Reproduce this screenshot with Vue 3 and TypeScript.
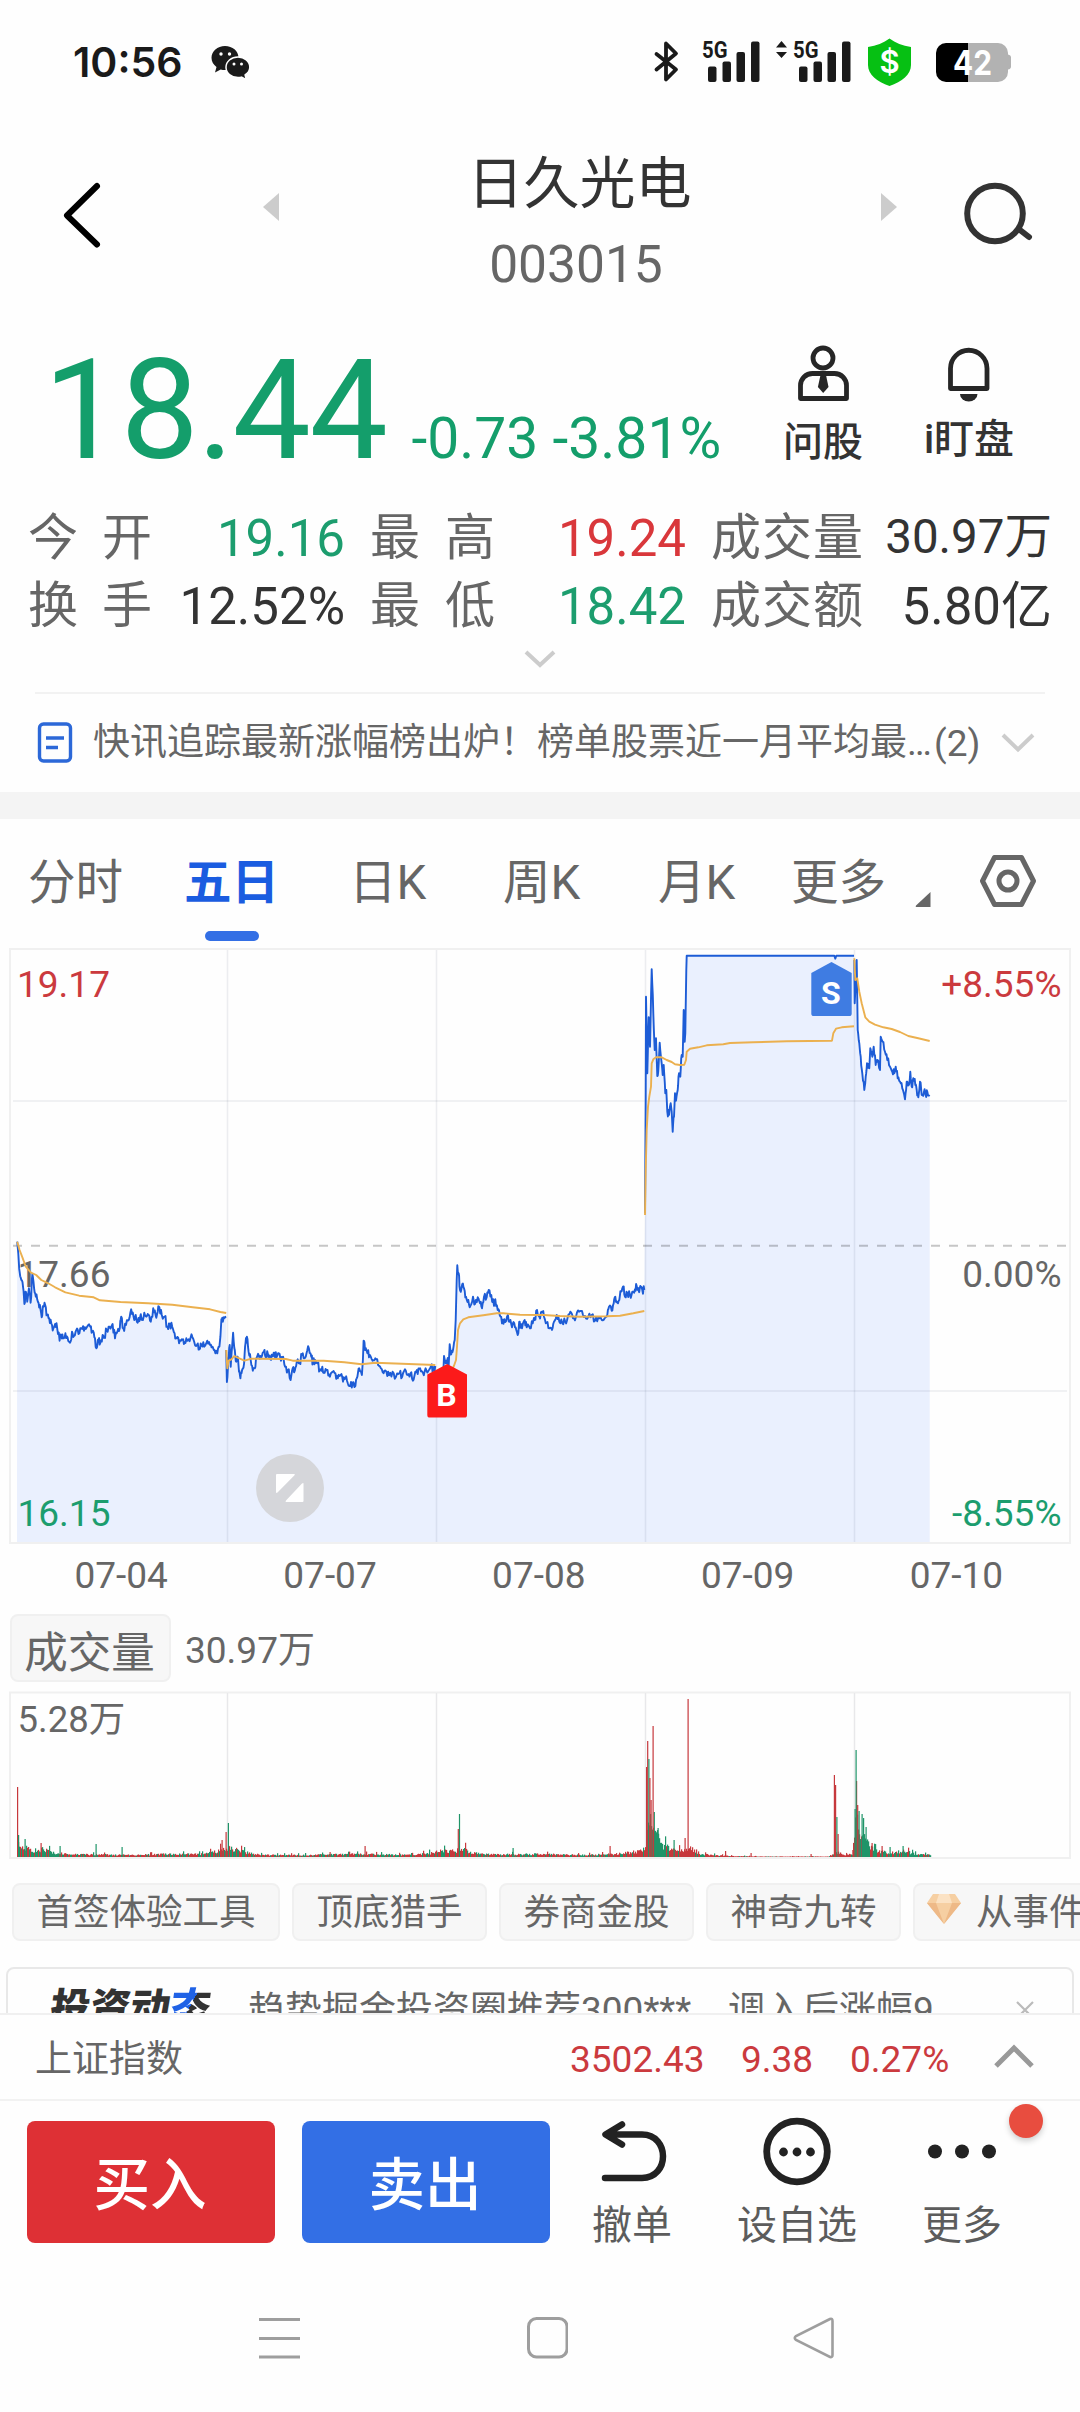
<script setup lang="ts">
type Point = [number, number]

interface Session {
  origin: Point
  unit: Point
  price: number[]
  average: number[]
}

const left: Pick<Session, 'origin' | 'unit'> = { origin: [0, 1200], unit: [2.904, 3] }
const middle: Pick<Session, 'origin' | 'unit'> = { origin: [400, 1200], unit: [3, 3] }
const right: Pick<Session, 'origin' | 'unit'> = { origin: [620, 930], unit: [3, 3] }

const sessions: Session[] = [
  {
    ...left,
    price: [50,125,53,160,57,215,62,240,67,262,71,312,75,275,79,305,84,265,89,308,94,222,99,265,104,290,110,305,116,315,121,352,126,320,131,314,137,345,143,355,149,370,155,385,160,372,166,385,173,422,178,405,183,415,190,400,196,412,203,428,209,395,215,408,222,390,228,402,236,385,244,392,252,382,262,380,268,395,274,412,280,445,286,418,291,430,298,405,303,412,310,390,318,380,327,372,334,415,341,395,348,385,352,350,358,385,366,375,374,360,381,328,388,350,394,345,400,368,407,350,413,355,419,338,425,350,431,345,438,365,445,325,452,345,458,335,463,322,470,345,478,350,486,380,493,372,500,380,507,400,513,415,520,430,528,418,534,432,541,415,548,418,556,403,564,425,572,435,579,448,585,435,593,440,602,422,610,435,617,440,623,450,631,460,637,440,640,410,643,358,647,365,650,352,657,350],
    average: [50,125,57,150,65,172,75,200,90,218,105,225,120,240,140,250,160,262,190,277,230,287,272,292,290,301,350,306,430,310,500,314,560,322,610,328,640,336,657,339],
  },
  {
    ...left,
    price: [657,450,659,546,663,475,667,435,670,500,674,440,677,398,682,450,686,485,690,470,694,515,698,535,703,510,709,490,713,430,717,410,722,455,728,480,734,512,740,505,745,475,752,468,758,475,766,455,772,472,778,462,785,478,791,465,797,458,803,472,810,460,816,482,822,470,828,500,836,510,844,540,850,505,856,512,862,485,870,490,877,465,884,475,890,460,897,445,904,470,909,488,915,480,922,490,929,510,936,500,943,518,951,510,958,530,966,515,974,520,981,535,989,525,996,545,1003,535,1010,550,1017,558,1024,548,1032,558,1038,530,1043,505,1051,525,1054,480,1056,422,1060,450,1067,460,1074,465,1082,482,1090,475,1098,495,1106,505,1114,520,1122,515,1130,526,1140,515,1150,530,1160,520,1168,530,1176,508,1184,525,1192,520,1199,542,1206,515,1213,522,1220,505,1228,518,1236,505,1244,512,1252,498,1258,510,1264,498],
    average: [657,450,660,505,664,482,672,478,680,468,695,475,710,482,730,476,830,477,850,482,940,482,1000,487,1050,493,1090,488,1264,495],
  },
  {
    ...middle,
    price: [110,530,120,540,130,520,132,468,137,490,142,480,146,495,149,433,154,462,159,450,164,420,167,360,170,240,172,196,176,220,180,270,187,252,192,265,198,290,205,300,211,318,219,290,225,312,233,292,240,310,246,325,252,290,260,292,266,270,274,285,282,318,286,298,293,330,299,345,306,370,313,358,321,350,329,365,336,382,343,370,349,390,355,400,359,365,366,385,374,360,380,382,390,385,398,370,404,360,411,330,418,350,425,335,432,350,440,368,448,385,456,390,462,365,470,345,478,365,487,370,496,365,503,352,511,335,519,355,528,350,537,335,546,333,555,348,565,350,575,345,585,362,595,352,605,360,614,355,622,345,627,320,635,332,641,310,646,290,652,308,658,300,663,275,669,260,675,290,682,278,690,285,697,275,705,268,710,258,716,272,721,258,727,270,733,270],
    average: [110,540,150,520,162,497,168,480,171,440,174,390,180,370,190,358,205,352,250,346,290,340,310,340,360,344,430,345,480,348,540,350,620,349,660,347,700,340,733,333],
  },
  {
    ...right,
    price: [75,850,77,500,78,200,82,430,86,262,90,350,95,118,100,250,104,360,108,325,112,438,116,400,119,338,124,390,128,435,131,405,136,490,139,480,142,545,147,555,152,520,155,545,158,605,162,560,165,490,168,512,173,480,177,430,181,440,185,375,188,380,191,240,194,335,196,310,199,120,200,77,643,77,646,86,649,77,702,77],
    average: [75,855,77,720,80,600,84,530,88,500,93,470,95,400,100,388,108,382,125,382,140,390,155,396,165,403,180,405,193,404,198,390,200,365,210,356,235,352,260,346,310,343,330,339,400,337,500,334,636,332,640,310,648,296,665,292,702,289],
  },
  {
    ...right,
    price: [703,90,704,220,707,160,710,90,713,300,718,340,722,380,727,430,733,480,737,440,741,400,748,415,751,355,757,380,761,350,767,405,772,390,780,420,782,320,788,335,795,365,802,390,810,410,817,425,823,430,827,410,833,445,840,455,847,475,855,508,860,455,866,465,871,425,875,470,880,445,886,465,890,480,895,502,900,455,905,495,912,485,917,495,922,485,929,498],
    average: [703,85,706,150,712,145,718,185,725,220,736,262,748,275,765,284,790,292,815,297,840,306,865,318,895,325,929,333],
  },
]

const noise = (n: number): number => {
  const v = Math.sin(n * 127.1 + 11.7) * 43758.5453
  return v - Math.floor(v)
}

const toPoints = (s: Session, flat: number[]): Point[] => {
  const out: Point[] = []
  for (let i = 0; i < flat.length; i += 2) {
    out.push([s.origin[0] + flat[i] / s.unit[0], s.origin[1] + flat[i + 1] / s.unit[1]])
  }
  return out
}

// Minute-level jitter between the recorded turning points.
const roughen = (pts: Point[]): Point[] => {
  const out: Point[] = []
  pts.forEach((p, i) => {
    out.push(p)
    const q = pts[i + 1]
    if (!q || q[0] - p[0] > 10 || q[0] - p[0] < 1.3) return
    for (const t of [0.33, 0.66]) {
      const j = (noise(p[0] + t * 7) - 0.5) * 8
      out.push([p[0] + (q[0] - p[0]) * t, p[1] + (q[1] - p[1]) * t + j])
    }
  })
  return out
}

const join = (pts: Point[]): string => pts.map(([x, y]) => `${x.toFixed(1)},${y.toFixed(1)}`).join(' ')

const priceLines = sessions.map((s) => roughen(toPoints(s, s.price)))
const averageLines = sessions.map((s) => join(toPoints(s, s.average)))
const pricePaths = priceLines.map(join)
const areaPath = (() => {
  const pts = priceLines.flat()
  return `17,1542 ${join(pts)} ${pts[pts.length - 1][0].toFixed(1)},1542`
})()

const gridX = [227.5, 436.5, 645.5, 854.5]
const dates = ['07-04', '07-07', '07-08', '07-09', '07-10']

interface Bar { x: number; h: number; up: boolean }

const envelope: Point[] = [
  [17, 14], [24, 11], [32, 7], [42, 8], [55, 4], [75, 2.5], [95, 2.5], [130, 2], [170, 3], [205, 3],
  [220, 7], [228, 9], [245, 5], [262, 2], [300, 2], [360, 3], [410, 2], [430, 4], [440, 6], [455, 6],
  [462, 9], [472, 4], [490, 2.5], [540, 3], [580, 2], [615, 3], [640, 6], [645, 12], [650, 40], [654, 30],
  [660, 14], [668, 9], [680, 6], [690, 10], [697, 3], [712, 2], [730, 1], [760, 0.5], [828, 0.5],
  [836, 5], [845, 2], [852, 3], [856, 40], [860, 26], [866, 15], [874, 7], [890, 4], [904, 6], [915, 3], [930, 2],
]
const level = (x: number): number => {
  const i = envelope.findIndex((p) => p[0] >= x)
  if (i <= 0) return envelope[i < 0 ? envelope.length - 1 : 0][1]
  const [x0, y0] = envelope[i - 1]
  const [x1, y1] = envelope[i]
  return y0 + ((y1 - y0) * (x - x0)) / (x1 - x0)
}
const bars: Bar[] = []
for (let i = 0; i < 914; i++) {
  const x = 17 + i
  const k = noise(x * 1.37)
  const spike = k > 0.93 ? 1.9 : 0.6 + k * 0.75
  const upShare = x < 60 || (x > 655 && x < 668) || x > 862 ? 0.3 : x > 668 && x < 855 ? 0.85 : 0.6
  bars.push({ x, h: level(x) * spike, up: noise(x * 3.1 + 5) < upShare })
}
const peaks: [number, number, boolean][] = [
  [17.5, 70, true], [18.5, 22, false], [25, 18, false], [41, 14, true], [60, 11, false], [96, 13, false],
  [122, 10, false], [222, 17, true], [226, 25, true], [228.3, 34, false], [330, 5, true], [365, 11, true],
  [458.2, 28, true], [459.4, 43, false], [513, 9, false], [610, 11, true], [646.5, 90, true],
  [647.6, 116, true], [648.8, 98, false], [649.8, 79, true], [651, 57, true], [654.2, 45, false],
  [653, 131, true], [658, 29, false], [674, 17, false], [685, 19, true], [688, 158, true], [725.5, 6, true],
  [751, 4, true], [811, 3, true], [834.3, 82, true], [835.5, 72, true], [836.8, 40, false], [838, 23, true],
  [852.8, 7, true], [855, 48, false], [856, 107, false], [857.6, 52, true], [859, 46, false],
  [862, 43, false], [866, 30, false], [872, 14, true], [882, 11, true], [890, 10, false], [903, 11, false],
]
peaks.forEach(([x, h, up]) => bars.push({ x: x - 0.5, h, up }))

const tabs = [
  { label: '分时', cls: 't1' },
  { label: '五日', cls: 't2 active' },
  { label: '日K', cls: 't3' },
  { label: '周K', cls: 't4' },
  { label: '月K', cls: 't5' },
  { label: '更多', cls: 't6' },
]
const tools = ['首签体验工具', '顶底猎手', '券商金股', '神奇九转']
</script>

<template>
  <div class="screen">
    <div class="status">
      <span class="clock">10:56</span>
      <svg class="wechat" width="40" height="36" viewBox="210 44 40 36">
        <path fill="#1a1a1a" d="M225 46c-7.600 0-13.500 5.200-13.500 11.800 0 3.800 1.900 7 5 9.200l-1.500 5.500 5.700-3c1.400.4 2.800.6 4.300.6 7.500 0 13.500-5.500 13.500-12.300S232.500 46 225 46z" />
        <path fill="#1a1a1a" stroke="#fff" stroke-width="1.500" d="M238 57c-6.800 0-12 4.600-12 10.300s5.200 10.300 12 10.300c1.200 0 2.400-.2 3.500-.5l4.800 2.500-1.200-4.600c2.900-1.900 4.700-4.600 4.700-7.700 0-5.700-5.300-10.300-11.800-10.300z" />
        <g fill="#fff"><circle cx="221" cy="54" r="1.700" /><circle cx="229.500" cy="54" r="1.700" /><circle cx="234" cy="64" r="1.500" /><circle cx="241.500" cy="64" r="1.500" /></g>
      </svg>
      <svg class="signals" width="380" height="64" viewBox="648 30 380 64">
        <path d="M656.500 54 676 69.500 666 79.500V43.500L676 53.500 656.500 69.500" fill="none" stroke="#1a1a1a" stroke-width="3.800" stroke-linejoin="round" stroke-linecap="round" />
        <g fill="#1a1a1a">
          <rect x="708" y="66.500" width="8.500" height="15.500" rx="2" /><rect x="722.500" y="61.500" width="8.500" height="20.500" rx="2" /><rect x="736.500" y="52" width="8.500" height="30" rx="2" /><rect x="751" y="41.500" width="8.500" height="40.500" rx="2" />
          <rect x="799" y="66.500" width="8.500" height="15.500" rx="2" /><rect x="813.500" y="61.500" width="8.500" height="20.500" rx="2" /><rect x="827.500" y="52" width="8.500" height="30" rx="2" /><rect x="842" y="41.500" width="8.500" height="40.500" rx="2" />
          <path d="M776 47.500 781.500 41 787 47.500zM776 52 781.500 58 787 52z" />
        </g>
        <text x="702" y="58" class="net" textLength="25.500" lengthAdjust="spacingAndGlyphs">5G</text>
        <text x="793" y="58" class="net" textLength="25.500" lengthAdjust="spacingAndGlyphs">5G</text>
        <path fill="#06c013" d="M889.500 38.500c6 4.500 13 7 21.500 8.500V65c0 10-9 16.500-21.500 21-12.500-4.500-21.500-11-21.500-21V47c8.500-1.500 15.500-4 21.500-8.500z" />
        <text x="889.500" y="72.500" class="dollar" text-anchor="middle">$</text>
        <path fill="#b2b2b2" d="M968 43h30a10 10 0 0 1 10 10v1.500q3 .5 3 3v9q0 2.500-3 3V72a10 10 0 0 1-10 10h-30z" />
        <path fill="#000" d="M968 43h-22a10 10 0 0 0-10 10v19a10 10 0 0 0 10 10h22z" />
        <text x="972.500" y="75" class="batt" text-anchor="middle" textLength="39" lengthAdjust="spacingAndGlyphs">42</text>
      </svg>
    </div>

    <header class="header">
      <svg class="back" width="44" height="70" viewBox="60 180 44 70"><path d="M97 186 67 215.500l30 29" fill="none" stroke="#000" stroke-width="6" stroke-linecap="round" stroke-linejoin="round" /></svg>
      <svg class="prev" width="18" height="28" viewBox="0 0 18 28"><path fill="#ccc" d="M17 0v28L1 14z" /></svg>
      <div class="title">
        <div class="name">日久光电</div>
        <div class="code">003015</div>
      </div>
      <svg class="next" width="18" height="28" viewBox="0 0 18 28"><path fill="#ccc" d="M1 0v28l16-14z" /></svg>
      <svg class="search" width="72" height="70" viewBox="962 180 72 70"><circle cx="995" cy="213.500" r="27.800" fill="none" stroke="#333" stroke-width="6" /><path d="m1020 230 9 7" stroke="#333" stroke-width="6" stroke-linecap="round" /></svg>
    </header>

    <section class="quote">
      <div class="figures"><span class="price">18.44</span><span class="change">-0.73 -3.81%</span></div>
      <div class="action ask">
        <svg width="56" height="60" viewBox="794 343 56 60">
          <g fill="none" stroke="#262626" stroke-width="4.800"><ellipse cx="822" cy="358" rx="10" ry="10" /><path stroke-linejoin="round" d="M799.500 398.500v-13a12 12 0 0 1 12-12h22a12 12 0 0 1 12 12v13z" /></g>
          <path fill="#262626" d="M819.500 375h5.500l2.500 12-5.300 6-5.300-6z" />
        </svg>
        <span>问股</span>
      </div>
      <div class="action watch">
        <svg width="56" height="60" viewBox="942 343 56 60">
          <path fill="none" stroke="#262626" stroke-width="4.800" stroke-linejoin="round" d="M951.500 388.500v-20a18 18 0 0 1 36.500 0v20z" />
          <path fill="#262626" d="M961 394h17.500a8.700 7.500 0 0 1-17.500 0z" />
        </svg>
        <span>i盯盘</span>
      </div>
    </section>

    <section class="stats">
      <div class="label"><span>今</span><span>开</span></div><div class="value down">19.16</div>
      <div class="label"><span>最</span><span>高</span></div><div class="value up">19.24</div>
      <div class="label"><span>成</span><span>交</span><span>量</span></div><div class="value small">30.97万</div>
      <div class="label"><span>换</span><span>手</span></div><div class="value">12.52%</div>
      <div class="label"><span>最</span><span>低</span></div><div class="value down">18.42</div>
      <div class="label"><span>成</span><span>交</span><span>额</span></div><div class="value">5.80亿</div>
    </section>
    <div class="expand"><svg width="34" height="20" viewBox="0 0 34 20"><path d="m3 3 14 13L31 3" fill="none" stroke="#ccc" stroke-width="4" /></svg></div>

    <section class="news">
      <svg width="36" height="42" viewBox="37 721 36 42"><rect x="39.500" y="723" width="31" height="37" rx="4" fill="none" stroke="#2c68d8" stroke-width="3.400" /><path d="M46 737h18M46 746.500h12" stroke="#2c68d8" stroke-width="3.400" /></svg>
      <span class="headline">快讯追踪最新涨幅榜出炉！榜单股票近一月平均最…</span>
      <span class="count">(2)</span>
      <svg class="caret" width="36" height="22" viewBox="0 0 36 22"><path d="m3 3 15 14.500L33 3" fill="none" stroke="#ccc" stroke-width="4" /></svg>
    </section>
    <div class="band"></div>

    <nav class="tabs">
      <div v-for="t in tabs" :key="t.label" :class="['tab', t.cls]"><span>{{ t.label }}</span></div>
      <svg class="corner" width="16" height="16" viewBox="0 0 16 16"><path fill="#666" d="M15.500 0v15H2q-2 0-1-1.500z" /></svg>
      <svg class="gear" width="58" height="54" viewBox="-29 -27 58 54"><path d="M-13.500-23.500h27L25.500 0l-12 23.500h-27L-25.500 0z" fill="none" stroke="#666" stroke-width="5" stroke-linejoin="round" /><circle r="9" fill="none" stroke="#666" stroke-width="5" /></svg>
    </nav>

    <svg class="chart" width="1080" height="656" viewBox="0 948 1080 656">
      <polygon :points="areaPath" fill="#eaf0fe" />
      <g fill="none" stroke="#f0f0f0" stroke-width="2"><rect x="10" y="949" width="1060" height="594" /></g>
      <g stroke="#1e2850" stroke-opacity=".08" stroke-width="1.500">
        <path v-for="x in gridX" :key="x" :d="`M${x} 950V1542`" />
        <path d="M13 1101H1067M13 1391H1067" />
      </g>
      <path d="M13 1245.700H1067" stroke="#000" stroke-opacity=".22" stroke-width="2" stroke-dasharray="9 9" />
      <g fill="none" stroke="#1d5cd6" stroke-width="1.900" stroke-linejoin="round"><polyline v-for="(p, i) in pricePaths" :key="i" :points="p" /></g>
      <text x="17" y="997" class="lab red">19.17</text>
      <text x="17.500" y="1287" class="lab">17.66</text>
      <text x="17.500" y="1526" class="lab green">16.15</text>
      <text x="1061.500" y="997" class="lab red end">+8.55%</text>
      <text x="1061.500" y="1287" class="lab end">0.00%</text>
      <text x="1061.500" y="1526" class="lab green end">-8.55%</text>
      <g fill="none" stroke="#ebb04f" stroke-width="1.900" stroke-linejoin="round"><polyline v-for="(p, i) in averageLines" :key="i" :points="p" /></g>
      <circle cx="290" cy="1488" r="34" fill="#d5d6da" />
      <path fill="#fff" d="M276.500 1474H294q1.500 0 .5 1.200l-17 17.300q-1.500 1-1.500-.5v-17zM303.500 1483.500V1501q0 1-1 1h-16.500q-1-.5 0-1.500l16-17q1.500-1 1.500 0z" />
      <path fill="#fc1a1a" d="M447.200 1364l19.800 10.500v40.500q0 2.600-2.600 2.600h-34.500q-2.600 0-2.600-2.600v-40.500z" />
      <text x="446.500" y="1405.500" class="mark">B</text>
      <path fill="#3f7ce2" d="M831.500 962l20.200 11v40.500q0 2.600-2.600 2.600H813.900q-2.600 0-2.600-2.600V973z" />
      <text x="830.800" y="1004" class="mark">S</text>
      <text v-for="(d, i) in dates" :key="d" :x="121.200 + 208.800 * i" y="1588" class="lab mid">{{ d }}</text>
    </svg>

    <div class="volume-head"><span class="indicator">成交量</span><span class="amount">30.97万</span></div>

    <svg class="volume" width="1080" height="170" viewBox="0 1690 1080 170">
      <rect x="10" y="1692.500" width="1060" height="165.500" fill="none" stroke="#f0f0f0" stroke-width="2" />
      <path v-for="x in gridX" :key="x" :d="`M${x} 1693V1857`" stroke="#e8e8ea" stroke-width="1.500" />
      <rect v-for="(b, i) in bars" :key="i" :x="b.x" :y="1857 - b.h" width="1.200" :height="b.h" :fill="b.up ? '#c6383c' : '#1f9468'" />
      <text x="17.500" y="1731.500" class="lab vol">5.28万</text>
    </svg>

    <div class="tools">
      <span v-for="t in tools" :key="t" class="tool">{{ t }}</span>
      <span class="tool gem">
        <svg width="34" height="32" viewBox="0 0 34 32"><path fill="#f6cfa2" d="M6 1h22l6 9-17 21L0 10z" /><path fill="#eeb987" d="M0 10h9l8 21zM34 10h-9l-8 21z" /><path fill="#fbe2c4" d="M9 10 12 1h10l3 9z" /></svg>从事件
      </span>
    </div>

    <div class="feed">
      <div class="card">
        <span class="brand">投资动<i>态</i></span>
        <span class="msg">趋势掘金投资圈推荐300***</span>
        <span class="msg two">调入后涨幅9</span>
        <svg width="18" height="18" viewBox="0 0 18 18"><path d="m1 1 16 16M17 1 1 17" stroke="#bbb" stroke-width="2.200" /></svg>
      </div>
    </div>

    <div class="index">
      <span class="iname">上证指数</span><span class="n1">3502.43</span><span class="n2">9.38</span><span class="n3">0.27%</span>
      <svg width="42" height="26" viewBox="0 0 42 26"><path d="M3 23 21 5l18 18" fill="none" stroke="#999" stroke-width="5" /></svg>
    </div>

    <footer class="trade">
      <button class="buy">买入</button>
      <button class="sell">卖出</button>
      <div class="op cancel">
        <svg width="72" height="70" viewBox="597 2117 72 70"><path d="M622 2124.500l-16.500 10 16.500 10M607 2134.500h35c28 0 28 43.500 0 43.500h-37" fill="none" stroke="#222" stroke-width="6.500" stroke-linecap="round" stroke-linejoin="round" /></svg>
        <span>撤单</span>
      </div>
      <div class="op pick">
        <svg width="70" height="70" viewBox="762 2117 70 70"><circle cx="797" cy="2151.500" r="30.300" fill="none" stroke="#222" stroke-width="6.800" /><g fill="#222"><circle cx="783.500" cy="2152" r="4.400" /><circle cx="797" cy="2152" r="4.400" /><circle cx="810.500" cy="2152" r="4.400" /></g></svg>
        <span>设自选</span>
      </div>
      <div class="op more">
        <svg width="70" height="70" viewBox="927.500 2117 70 70"><g fill="#222"><circle cx="935.500" cy="2151.500" r="7" /><circle cx="962.500" cy="2151.500" r="7" /><circle cx="989.500" cy="2151.500" r="7" /></g></svg>
        <span>更多</span>
        <b class="badge"></b>
      </div>
    </footer>

    <div class="sysnav">
      <svg width="42" height="44" viewBox="0 0 42 44"><path d="M0 3.500h41M0 22.500h41M0 41h41" stroke="#9e9e9e" stroke-width="3" /></svg>
      <svg width="42" height="44" viewBox="0 0 42 44"><rect x="2.500" y="2.500" width="38.500" height="38.500" rx="8" fill="none" stroke="#9e9e9e" stroke-width="3" /></svg>
      <svg width="42" height="44" viewBox="0 0 42 44"><path d="M37 3 3 20q-2.500 2 0 4l34 17q2.500.5 2.500-2V5q0-3-2.500-2z" fill="none" stroke="#9e9e9e" stroke-width="2.600" /></svg>
    </div>
  </div>
</template>

<style>
body { margin: 0; background: #fefefe; }
</style>

<style scoped>
.screen { width: 1080px; height: 2412px; overflow: hidden; background: #fefefe; font-family: Roboto, "Noto Sans CJK SC", sans-serif; color: #666; white-space: nowrap; display: flex; flex-direction: column; }
.screen > * { flex: none; box-sizing: border-box; }
svg { display: block; flex: none; }

.status { height: 124px; display: flex; align-items: flex-start; padding-left: 73px; }
.clock { width: 137px; padding-top: 42px; font: 600 41px/40px Inter, sans-serif; color: #1a1a1a; }
.wechat { margin-top: 44px; }
.signals { margin: 30px 0 0 398px; }
.net { font: 700 23px Roboto, sans-serif; fill: #1a1a1a; }
.dollar { font: 600 31px Inter, sans-serif; fill: #fff; }
.batt { font: 700 34px Inter, sans-serif; fill: #fff; }

.header { height: 186px; display: flex; align-items: flex-start; padding: 0 46px 0 60px; }
.back { margin-top: 56px; }
.prev { margin: 69px 0 0 158px; }
.title { flex: 1; text-align: center; }
.name { margin: 26px 0 0 -1px; font-size: 56px; line-height: 68px; color: #333; }
.code { margin: 7px 0 0 -8px; font-size: 51.500px; line-height: 80px; }
.next { margin: 69px 64px 0 0; }
.search { margin-top: 56px; }

.quote { height: 194px; display: flex; align-items: flex-start; }
.figures { width: 762px; padding: 41px 0 0 43.500px; box-sizing: border-box; display: flex; align-items: baseline; color: #149e6b; }
.price { width: 368px; font-size: 139.500px; line-height: 120px; letter-spacing: -1.500px; }
.change { font-size: 57px; line-height: 60px; }
.action { width: 120px; margin: 33px 0 0 1px; display: flex; flex-direction: column; align-items: center; color: #333; font-size: 40px; line-height: 48px; font-weight: 500; }
.action span { margin-top: 16px; }
.watch { width: 160px; margin-left: 6px; }
.watch span { margin-top: 13px; }

.stats { display: grid; grid-template-columns: 124px 193px 150px 191px 177px 189px; grid-auto-rows: 68px; padding-left: 28px; height: 136px; line-height: 69px; }
.label { display: flex; justify-content: space-between; font-size: 50px; }
.stats > :nth-child(6n+3), .stats > :nth-child(6n+5) { padding-left: 25px; }
.value { text-align: right; font-size: 51px; color: #333; }
.value.small { font-size: 47.500px; line-height: 66px; }
.value.up { color: #d9373b; }
.value.down { color: #1c9d6e; }
.expand { height: 52px; padding-top: 9px; display: flex; justify-content: center; }

.news { height: 100px; margin: 0 35px; border-top: 2px solid #f2f2f2; display: flex; align-items: center; font-size: 37px; line-height: 48px; }
.news svg:first-child { margin: -1px 0 0 2px; }
.headline { width: 841px; margin: 0 0 0 20px; }
.count { width: 66px; margin-top: 1px; }
.band { height: 27px; background: #f4f4f4; }

.tabs { height: 129px; display: flex; align-items: flex-start; padding-left: 28px; font-size: 47.500px; line-height: 57px; }
.tab { padding-top: 36px; height: 122px; box-sizing: border-box; display: flex; flex-direction: column; align-items: flex-start; }
.t1 { width: 156px; } .t2 { width: 165px; } .t3 { width: 154px; } .t4 { width: 155px; } .t5 { width: 133px; } .t6 { width: 124px; }
.active { color: #1a5ce0; font-weight: 700; }
.active::after { content: ""; width: 54px; height: 10px; margin: 19px 0 0 21px; border-radius: 5px; background: #336fe5; }
.corner { margin-top: 73px; }
.gear { margin: 35px 0 0 48px; }

.lab { font: 37px Roboto, "Noto Sans CJK SC", sans-serif; fill: #666; }
.lab.red { fill: #cb3a3e; }
.lab.green { fill: #1c9d6e; }
.lab.end { text-anchor: end; }
.lab.mid { text-anchor: middle; }
.lab.vol { font-size: 36.500px; }
.mark { font: 700 32px Roboto, sans-serif; fill: #fff; text-anchor: middle; }

.volume-head { height: 86px; padding: 10px 0 0 10px; display: flex; align-items: flex-start; }
.indicator { box-sizing: border-box; width: 161px; height: 68px; border: 2px solid #f0f0f0; border-radius: 8px; background: #f7f7f7; padding-right: 2px; font-size: 43.500px; line-height: 75px; text-align: center; }
.amount { margin-left: 14px; font-size: 37px; line-height: 74px; }

.tools { height: 107px; padding: 23px 0 0 12px; display: flex; gap: 12px; align-items: flex-start; overflow: hidden; }
.tool { flex: none; box-sizing: border-box; height: 58px; padding: 1px 22.500px 0; border: 2px solid #f0f0f0; border-radius: 8px; background: #f7f7f7; font-size: 36.500px; line-height: 56px; display: flex; align-items: center; }
.gem { padding-left: 12px; }
.gem svg { margin: -7px 15px 0 0; }

.feed { height: 46px; overflow: hidden; padding: 0 6px; }
.card { height: 90px; box-sizing: border-box; border: 2px solid #e8e8e8; border-radius: 8px; display: flex; align-items: flex-start; font-size: 37px; line-height: 40px; padding: 20px 0 0 42px; }
.brand { width: 198px; font-size: 40px; font-weight: 900; color: #333; transform: skewX(-8deg); }
.brand i { font-style: normal; color: transparent; background: linear-gradient(112deg, #1f62e6 48%, #333 48%); background-clip: text; -webkit-background-clip: text; }
.msg { width: 480px; margin-top: 2px; }
.two { width: 288px; }
.card svg { margin-top: 12px; }

.index { height: 88px; border-top: 2px solid #f0f0f0; border-bottom: 2px solid #f2f2f2; padding: 5px 0 0 35px; display: flex; align-items: center; font-size: 37px; line-height: 50px; color: #cb3a3e; }
.iname { width: 535px; color: #666; }
.n1 { width: 171px; } .n2 { width: 109px; } .n3 { width: 143px; }
.index svg { margin-top: -7px; }

.trade { height: 160px; display: flex; align-items: flex-start; padding: 20px 0 0 27px; }
button { width: 248px; height: 122px; margin: 0 27px 0 0; padding: 0 2px 4px 0; border: 0; border-radius: 8px; font: 500 56.500px "Noto Sans CJK SC", sans-serif; color: #fff; }
.buy { background: #de3035; }
.sell { background: #336fe5; }
.op { position: relative; display: flex; flex-direction: column; align-items: center; margin-top: -4px; font-size: 40px; line-height: 48px; color: #5c5c5c; }
.op span { margin-top: 15px; }
.cancel { width: 112px; margin-left: 0; }
.cancel span { margin-left: -2px; }
.pick { width: 140px; margin-left: 38px; }
.more { width: 100px; margin-left: 45px; }
.badge { position: absolute; left: 97px; top: -13px; width: 34px; height: 34px; border-radius: 50%; background: #e84d3f; box-shadow: 0 3px 6px rgba(0, 0, 0, .2); }

.sysnav { height: 152px; padding: 55px 0 0 259px; display: flex; gap: 225px; }
</style>
